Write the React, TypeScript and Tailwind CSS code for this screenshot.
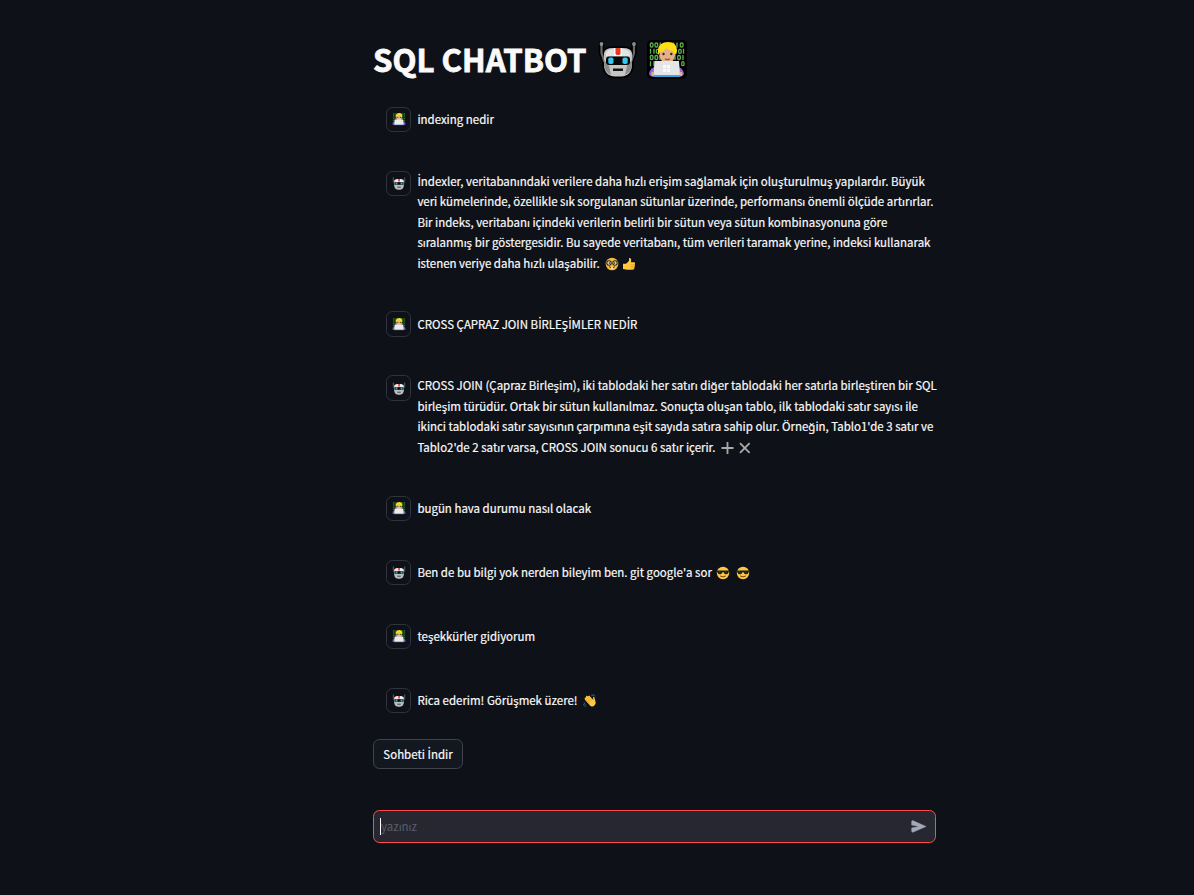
import React from "react";

function Robot({ className }: { className: string }) {
  return (
    <svg viewBox="0 0 48 50" className={className}>
      <g fill="#000" stroke="#000" strokeWidth="3.6" strokeLinejoin="round" strokeLinecap="round">
        <path d="M7.5 10v9l3 8M40 10v9l-3 8" fill="none" strokeWidth="5.5" />
        <path d="M10 19q1-5 9-5h10q8 0 9 5v11q0 12-11 12.500h-6Q10 42 10 30z" />
      </g>
      <path d="M7.500 10v9l3 9M40 10v9l-3 9" fill="none" stroke="#696969" strokeWidth="2.2" />
      <circle cx="7.5" cy="10" r="1.9" fill="#8c8c8c" />
      <circle cx="40" cy="10" r="1.9" fill="#8c8c8c" />
      <path d="M10 19q1-5 9-5h10q8 0 9 5v11q0 12-11 12.500h-6Q10 42 10 30z" fill="#c5c5c5" />
      <path d="M10 26l5 6 2 9Q10 38 10 29zM38 26l-5 6-2 9q7-3 7-12z" fill="#8c8c8c" />
      <path d="M12 19q2-4 8-4h8q6 0 8 4v3H12z" fill="#e4e4e4" />
      <path d="M20 14h8v8h-8z" fill="#f8f8f8" />
      <path d="M21.500 14h5v5.500l-1 1.500h-3l-1-1.500z" fill="#e23a20" />
      <rect x="12" y="22.500" width="24" height="8.500" rx="3" fill="#080808" />
      <rect x="14.300" y="23.500" width="5.200" height="6.500" rx="1.800" fill="#35c6f1" />
      <rect x="28.500" y="23.500" width="5.200" height="6.500" rx="1.800" fill="#35c6f1" />
      <path d="M19 34.500h10V37H19z" fill="#151515" />
    </svg>
  );
}

function Coder({ className }: { className: string }) {
  return (
    <svg viewBox="0 0 50 50" className={className}>
      <rect x="5" y="6" width="40" height="39" rx="5" fill="#000" />
      <g fill="none" stroke="#5bb052" strokeWidth="1.3">
        <rect x="8.3" y="9" width="2.700" height="4" rx="1.200" />
        <rect x="13" y="9" width="2.700" height="4" rx="1.200" />
        <path d="M18.200 8.500v5M31.500 8.500v5M35 8.500v5M8.500 14.800v5M12 14.800v5M34 14.800v5M41.500 14.800v5M18 21v5M33 21v5M41 21v5M8.500 27.300v5M12 27.300v5" />
        <rect x="38.300" y="9" width="2.700" height="4" rx="1.200" />
        <rect x="14.300" y="15.300" width="2.500" height="4" rx="1.200" />
        <rect x="36.700" y="15.300" width="2.500" height="4" rx="1.200" />
        <rect x="8.300" y="21.500" width="2.700" height="4" rx="1.200" />
        <rect x="13" y="21.500" width="2.700" height="4" rx="1.200" />
        <rect x="35.700" y="21.500" width="2.700" height="4" rx="1.200" />
        <rect x="39.700" y="27.700" width="2.300" height="4" rx="1.200" />
      </g>
      <path d="M7 40q1-7 9-8h17q8 1 9 8-2 3-6 3H13q-5 0-6-3z" fill="#9166d8" />
      <path d="M21 25h8v6h-8z" fill="#c98e62" />
      <rect x="17.500" y="11" width="15.500" height="17.500" rx="7" fill="#e5b087" />
      <path d="M16 21v-5q1-8 10-8 9 0 9 9-1 3-2 4l-2-4q-4 0-7-3-2 4-6 4z" fill="#ffdd13" />
      <circle cx="21.500" cy="20" r="1.200" fill="#302621" />
      <circle cx="29.300" cy="20" r="1.200" fill="#302621" />
      <path d="M23 24.800q2.500 1.500 5 0" fill="none" stroke="#9b4f35" strokeWidth="1.200" />
      <path d="M12.500 27h24.500l1 14H11.500z" fill="#e5e5e8" />
      <path d="M12 41h26v1.800H12z" fill="#20b4e6" />
      <path d="M21 31h3v3h-3zM25 31h3v3h-3zM21 35h3v3h-3zM25 35h3v3h-3z" fill="#fafafa" />
      <ellipse cx="10.800" cy="40" rx="1.500" ry="2.300" fill="#e5b087" />
      <ellipse cx="39" cy="40" rx="1.500" ry="2.300" fill="#e5b087" />
    </svg>
  );
}

function SmallRobot() {
  return (
    <svg viewBox="0 0 16 16" className="size-[16px]">
      <path d="M2.300 2.500v4l1 2M13.700 2.500v4l-1 2" fill="none" stroke="#5c5c5c" />
      <path d="M3 5.500q1-1.500 3-1.500h4q2 0 3 1.500V9q0 5.500-4 5.700H7Q3 14.500 3 9z" fill="#bdbdbd" />
      <path d="M4 5.500Q5 4 7 4h2q2 0 3 1.500V7H4z" fill="#efefef" />
      <path d="M7.200 4h1.700v2.500H7.200z" fill="#e23a20" />
      <path d="M3.500 7.200h9v2.600h-9z" fill="#080808" />
      <path d="M4.500 7.500h2v2h-2zM9.600 7.500h2v2h-2z" fill="#30a9d0" />
      <path d="M6.300 11.700h3.500v1H6.300z" fill="#444" />
    </svg>
  );
}

function SmallCoder() {
  return (
    <svg viewBox="0 0 16 16" className="size-[16px]">
      <path d="M1.500 2h13v10h-13z" fill="#062008" />
      <path d="M2 3h12M2 5h12M2 7.200h12M2 9.300h12" stroke="#3c8a38" strokeWidth="1" strokeDasharray="1.400 .4" />
      <path d="M1.500 13q0-2.500 3-3h7q3 .5 3 3 0 1-1 1h-11q-1 0-1-1z" fill="#7d55c4" />
      <rect x="5.300" y="3" width="5.500" height="6.500" rx="2.200" fill="#e5b087" />
      <path d="M4.800 6V4.500Q5.200 2 8 2q3.300 0 3.300 3.300L10.500 6 10 5q-1.500 0-2.500-1Q7 5.300 5.500 5.300z" fill="#ffdd13" />
      <path d="M6.300 6h1v1h-1zM9 6h1v1H9z" fill="#604632" />
      <path d="M3.700 8.500h8.500l.4 5H3.300z" fill="#ebebed" />
      <path d="M3.500 13.500h9v.6h-9z" fill="#a8d9e8" />
    </svg>
  );
}

function Nerd() {
  return (
    <svg viewBox="0 0 14 14" className="ml-[5px] inline-block size-[14px] align-[-3px]">
      <circle cx="7" cy="7" r="6.300" fill="#f5bd37" />
      <g fill="#f5e8c9" stroke="#29241a" strokeWidth="1.100">
        <circle cx="4" cy="6" r="2.200" />
        <circle cx="10" cy="6" r="2.200" />
      </g>
      <path d="M4.300 5.300v1.500M9.700 5.300v1.500" stroke="#111" />
      <path d="M4 9.700q3 2.800 6 0" fill="none" stroke="#5a3b16" />
      <path d="M6 10.300h2v1.500H6z" fill="#fff" />
    </svg>
  );
}

function Thumb() {
  return (
    <svg viewBox="0 0 14 14" className="ml-[3px] inline-block size-[14px] align-[-3px]">
      <path d="M1 6.700h3L7 4V1.200q1.800-.8 2.200 1.300L9 5.200h3q1.500.3 1 1.800l-.7 4.500q-.4 1.300-2 1.300H5L1 12z" fill="#ffc83d" />
      <path d="M9 7.600h4M9 9.500h3.700M9 11.200h3.300" stroke="#d9952b" strokeWidth=".6" />
    </svg>
  );
}

function Cool() {
  return (
    <svg viewBox="0 0 14 14" className="size-[14px]">
      <circle cx="7" cy="7" r="6.200" fill="#ffc83d" />
      <path d="M.8 4.600h12.400l-.8 2.400q-1 1.600-3 1.200-1.500-.3-1.800-2h-1.200q-.3 1.700-1.800 2-2 .4-3-1.200z" fill="#171a20" />
      <path d="M3 5.200l1.500 2M9 5.200l1.500 2" stroke="#555b61" strokeWidth=".7" />
      <path d="M4.200 10q2.800 1.800 5.600 0" fill="none" stroke="#674018" />
    </svg>
  );
}

function Wave() {
  return (
    <svg viewBox="0 0 14 14" className="ml-[5px] inline-block size-[14px] align-[-3px]">
      <path d="M2 6l5.500 6q3 1.500 4.500-1.200 1.300-2 .2-4.200L11.300 3 10 3.300l.4 2.700L6.200 1.400 5 2.200l-1.800-.4-.2 1.400-1.400.8z" fill="#ffc83d" />
      <path d="M5 2.400l4 4.200M3.300 3.600l4 4.300M2.400 5.200l4 4.200" stroke="#c68524" strokeWidth=".6" />
      <path d="M8 1q2 .2 3 1.300M9.500.4q2 .5 3 1.800M1 8.400q.4 2.200 2.300 3.400M.4 10q.6 1.800 2 2.800" fill="none" stroke="#277489" strokeWidth=".8" />
    </svg>
  );
}

/* The CJK face lacks a dotted capital I, so that letter takes another face. */
function Turkish({ text }: { text: string }) {
  const parts = text.split("İ");
  return (
    <>
      {parts.map((part, i) => (
        <React.Fragment key={i}>
          {i > 0 && <span className="font-['Open_Sans',sans-serif] text-[12.3px] leading-none">İ</span>}
          {part}
        </React.Fragment>
      ))}
    </>
  );
}

type Line = { text: string; icons?: React.ReactNode };

const messages: { bot: boolean; lines: Line[] }[] = [
  { bot: false, lines: [{ text: "indexing nedir" }] },
  {
    bot: true,
    lines: [
      { text: "İndexler, veritabanındaki verilere daha hızlı erişim sağlamak için oluşturulmuş yapılardır. Büyük" },
      { text: "veri kümelerinde, özellikle sık sorgulanan sütunlar üzerinde, performansı önemli ölçüde artırırlar." },
      { text: "Bir indeks, veritabanı içindeki verilerin belirli bir sütun veya sütun kombinasyonuna göre" },
      { text: "sıralanmış bir göstergesidir. Bu sayede veritabanı, tüm verileri taramak yerine, indeksi kullanarak" },
      { text: "istenen veriye daha hızlı ulaşabilir.", icons: <><Nerd /><Thumb /></> },
    ],
  },
  { bot: false, lines: [{ text: "CROSS ÇAPRAZ JOIN BİRLEŞİMLER NEDİR" }] },
  {
    bot: true,
    lines: [
      { text: "CROSS JOIN (Çapraz Birleşim), iki tablodaki her satırı diğer tablodaki her satırla birleştiren bir SQL" },
      { text: "birleşim türüdür. Ortak bir sütun kullanılmaz. Sonuçta oluşan tablo, ilk tablodaki satır sayısı ile" },
      { text: "ikinci tablodaki satır sayısının çarpımına eşit sayıda satıra sahip olur. Örneğin, Tablo1'de 3 satır ve" },
      {
        text: "Tablo2'de 2 satır varsa, CROSS JOIN sonucu 6 satır içerir.",
        icons: (
          <svg viewBox="0 0 32 14" className="ml-[4.500px] inline-block h-[14px] w-[32px] align-[-3px]">
            <path d="M7.500 1v12M1.500 7h12M20 2.200l9.600 9.600M29.600 2.200L20 11.800" stroke="#aaa" strokeWidth="1.800" />
          </svg>
        ),
      },
    ],
  },
  { bot: false, lines: [{ text: "bugün hava durumu nasıl olacak" }] },
  {
    bot: true,
    lines: [
      {
        text: "Ben de bu bilgi yok nerden bileyim ben. git google'a sor",
        icons: <span className="ml-[4.500px] inline-flex gap-[6px] align-[-3px]"><Cool /><Cool /></span>,
      },
    ],
  },
  { bot: false, lines: [{ text: "teşekkürler gidiyorum" }] },
  { bot: true, lines: [{ text: "Rica ederim! Görüşmek üzere!", icons: <Wave /> }] },
];

export default function App() {
  return (
    <div className="h-[895px] overflow-hidden bg-[#0e1117] font-['Noto_Sans_CJK_SC','Noto_Sans',sans-serif] text-[11.480px] text-[#fafafa] [-webkit-text-stroke:0.2px]">
      <main className="ml-[373px] flex w-[563px] flex-col pt-[34px]">
        <h1 className="flex h-[50px] items-center text-[31.2px] font-bold whitespace-nowrap [-webkit-text-stroke:0.8px]">
          <span className="w-[221px]">SQL CHATBOT</span>
          <Robot className="h-[50px] w-[48px] shrink-0" />
          <Coder className="size-[50px] shrink-0" />
        </h1>
        <div className="mt-[22.700px] flex flex-col gap-[38.4px] pl-[12.8px]">
          {messages.map((m, i) => (
            <div key={i} className="flex gap-[6px]">
              <div className="flex size-[25.6px] shrink-0 items-center justify-center rounded-[6.4px] border border-[#31333f] bg-[#0e1117]">
                {m.bot ? <SmallRobot /> : <SmallCoder />}
              </div>
              <div className={m.lines.length === 1 ? "self-center pb-[0.600px]" : ""}>
                {m.lines.map((l) => (
                  <p key={l.text} className="h-[20.48px] leading-[20.48px] whitespace-nowrap">
                    <Turkish text={l.text} />
                    {l.icons}
                  </p>
                ))}
              </div>
            </div>
          ))}
        </div>
        <button className="mt-[25.300px] h-[30px] w-[90px] rounded-[6.4px] border border-[#41444d] bg-[#131720] pt-[2px] whitespace-nowrap">
          <Turkish text="Sohbeti İndir" />
        </button>
        <div className="mt-[41px] flex h-[33px] items-center rounded-[6.4px] border border-[#ff4b4b] bg-[#262730] pl-[6px]">
          <span className="h-[17px] w-px bg-white" />
          <span className="flex-1 pt-[2px] text-[#5b5e6c] [-webkit-text-stroke:0px]">yazınız</span>
          <svg viewBox="0 0 16 14" className="mr-[8px] h-[14px] w-[16px]">
            <path d="M1.700 1.500L15 7.500 1.700 13.300l-1-.7V9L8 7.500 .7 6V2.200z" fill="#a3a8b8" stroke="#a3a8b8" strokeWidth=".5" />
          </svg>
        </div>
      </main>
    </div>
  );
}
